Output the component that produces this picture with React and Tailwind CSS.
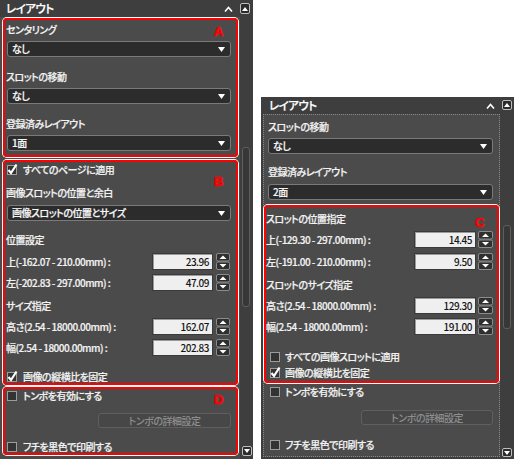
import React from "react";

function Label({ children, className = "" }) {
  return <div className={`h-[14px] whitespace-nowrap leading-[14px] text-[#f2f2f2] ${className}`}>{children}</div>;
}

function Dropdown({ value, className = "" }) {
  return (
    <div className={`flex h-[16px] items-center justify-between rounded-[3px] border border-[#7a7a7a] bg-[#2c2c2c] pl-[4px] pr-[5px] ${className}`}>
      <span className="leading-none text-[#f6f6f6]">{value}</span>
      <svg width="7" height="5" viewBox="0 0 7 5">
        <path d="M0 0H7L3.5 5Z" fill="#ffffff" />
      </svg>
    </div>
  );
}

function Spinner({ w }) {
  return (
    <svg width={w} height="17" viewBox={`0 0 ${w} 17`} className="shrink-0">
      <rect x="0.5" y="0.5" width={w - 1} height="7.5" rx="1.5" fill="#2f2f2f" stroke="#8c8c8c" />
      <rect x="0.5" y="9" width={w - 1} height="7.5" rx="1.5" fill="#2f2f2f" stroke="#8c8c8c" />
      <path d={`M${w / 2 - 3.5} 6L${w / 2} 2.5L${w / 2 + 3.5} 6Z`} fill="#ffffff" />
      <path d={`M${w / 2 - 3.5} 11L${w / 2 + 3.5} 11L${w / 2} 14.5Z`} fill="#ffffff" />
    </svg>
  );
}

function NumRow({ label, value, inputW, spinW, gap, className = "" }) {
  return (
    <div className={`flex h-[17px] items-center ${className}`}>
      <span className="flex-1 whitespace-nowrap text-[#f2f2f2]">{label}</span>
      <div
        style={{ width: inputW }}
        className="h-[17px] border border-[#3a3a3a] bg-[#efefef] pr-[3px] text-right leading-[15px] text-[#151515] shadow-[inset_1px_1px_0_#9a9a9a] [-webkit-text-stroke-width:0px]"
      >
        {value}
      </div>
      <div style={{ width: gap }} />
      <Spinner w={spinW} />
    </div>
  );
}

function Check({ checked, children, className = "", gap = "gap-[6px]" }) {
  return (
    <div className={`flex h-[12px] items-center ${gap} ${className}`}>
      <svg width="10" height="10" viewBox="0 0 10 10" className="shrink-0 overflow-visible">
        <rect x="0.5" y="0.5" width="9" height="9" fill="#333333" stroke="#9c9c9c" />
        {checked && <polyline points="1.5,5 4,8 9.5,-0.5" fill="none" stroke="#ffffff" strokeWidth="2.2" />}
      </svg>
      <span className="whitespace-nowrap leading-[12px] text-[#f2f2f2]">{children}</span>
    </div>
  );
}

function MarkButton({ className = "" }) {
  return (
    <div className={`flex h-[15px] items-center justify-center rounded-[3px] border border-[#5f5f5f] bg-[#474747] text-[#8e8e8e] [-webkit-text-stroke-width:0px] ${className}`}>
      トンボの詳細設定
    </div>
  );
}

function RedBox({ letter, letterPos, className = "", children }) {
  return (
    <div className={`relative rounded-[4px] border-2 border-[#ff0000] shadow-[0_0_0_1px_#ffffff] ${className}`}>
      {children}
      <span className={`absolute font-['Liberation_Sans',sans-serif] text-[13px] font-bold leading-[13px] tracking-normal text-[#ff0000] [-webkit-text-stroke-width:0.6px] ${letterPos}`}>
        {letter}
      </span>
    </div>
  );
}

function Chevron() {
  return (
    <svg width="9" height="6" viewBox="0 0 9 6">
      <polyline points="1,5.5 4.5,1.5 8,5.5" fill="none" stroke="#ffffff" strokeWidth="1.6" />
    </svg>
  );
}

function ScrollBtn({ up, className = "" }) {
  return (
    <div className={`flex items-center justify-center rounded-[2px] border border-[#bdbdbd] bg-[#2b2b2b] ${className}`}>
      <svg width="6" height="4" viewBox="0 0 6 4">
        {up ? <path d="M0 4L3 0L6 4Z" fill="#ffffff" /> : <path d="M0 0H6L3 4Z" fill="#ffffff" />}
      </svg>
    </div>
  );
}

function Thumb({ className = "" }) {
  return <div className={`rounded-[3px] border border-[#5e5e5e] bg-[#373737] ${className}`} />;
}

function LeftPanel() {
  return (
    <div className="flex h-[459px] w-[253px] shrink-0 bg-[#3e3e3e]">
      <div className="flex w-[240px] flex-col">
        <div className="flex h-[17px] items-center justify-between pl-[6px] pr-[7px]">
          <span className="text-[11.5px] leading-none text-[#ffffff]">レイアウト</span>
          <Chevron />
        </div>
        <div className="flex flex-1 flex-col bg-[#4b4b4b] pt-[1px]">
          <RedBox letter="A" letterPos="left-[209px] top-[5px]" className="ml-[3px] mr-[2px] pb-[4px] pl-[1px] pr-[5px] pt-[3px]">
            <Label>センタリング</Label>
            <Dropdown value="なし" className="ml-[1px] mt-[4px]" />
            <Label className="mt-[13px]">スロットの移動</Label>
            <Dropdown value="なし" className="ml-[1px] mt-[4px]" />
            <Label className="mt-[13px]">登録済みレイアウト</Label>
            <Dropdown value="1面" className="ml-[1px] mt-[4px]" />
          </RedBox>
          <RedBox letter="B" letterPos="left-[209px] top-[13px]" className="ml-[3px] mr-[2px] mt-[3px] pl-[1px] pr-[5px] pt-[2px]">
            <Check checked className="ml-[1px]">すべてのページに適用</Check>
            <Label className="mt-[10px]">画像スロットの位置と余白</Label>
            <Dropdown value="画像スロットの位置とサイズ" className="ml-[1px] mt-[5px]" />
            <Label className="mt-[12px]">位置設定</Label>
            <NumRow className="mt-[6px] pr-[1px]" label="上(-162.07 - 210.00mm) :" value="23.96" inputW={61} spinW={14} gap={3} />
            <NumRow className="mt-[4px] pr-[1px]" label="左(-202.83 - 297.00mm) :" value="47.09" inputW={61} spinW={14} gap={3} />
            <Label className="mt-[8px]">サイズ指定</Label>
            <NumRow className="mt-[5px] pr-[1px]" label="高さ(2.54 - 18000.00mm) :" value="162.07" inputW={61} spinW={14} gap={3} />
            <NumRow className="mt-[4px] pr-[1px]" label="幅(2.54 - 18000.00mm) :" value="202.83" inputW={61} spinW={14} gap={3} />
            <Check checked className="ml-[1px] mt-[15px]">画像の縦横比を固定</Check>
          </RedBox>
          <RedBox letter="D" letterPos="left-[209px] top-[4px]" className="ml-[3px] mr-[2px] mt-[2px] flex flex-col pl-[1px] pr-[5px] pt-[1px]">
            <Check className="ml-[1px]">トンボを有効にする</Check>
            <MarkButton className="mt-[11px] w-[133px] self-end" />
            <Check className="ml-[1px] mt-[13px]">フチを黒色で印刷する</Check>
          </RedBox>
        </div>
      </div>
      <div className="flex w-[13px] flex-col">
        <ScrollBtn up className="mt-[3px] h-[11px] w-[10px]" />
        <div className="flex-1">
          <Thumb className="ml-[2px] mt-[133px] h-[160px] w-[8px]" />
        </div>
        <ScrollBtn className="mb-[3px] ml-[2px] h-[10px] w-[10px]" />
      </div>
    </div>
  );
}

function RightPanel() {
  return (
    <div className="ml-[8px] mt-[97px] flex h-[362px] w-[253px] shrink-0 bg-[#3e3e3e]">
      <div className="flex w-[239px] flex-col">
        <div className="flex h-[17px] items-center justify-between pl-[8px] pr-[5px]">
          <span className="text-[11.5px] leading-none text-[#ffffff]">レイアウト</span>
          <Chevron />
        </div>
        <div className="mb-[2px] ml-[2px] flex flex-1 flex-col border border-dotted border-[#8a8a8a] bg-[#4b4b4b] pt-[5px]">
          <Label className="pl-[4px]">スロットの移動</Label>
          <Dropdown value="なし" className="ml-[4px] mr-[6px] mt-[4px]" />
          <Label className="mt-[11px] pl-[4px]">登録済みレイアウト</Label>
          <Dropdown value="2面" className="ml-[4px] mr-[6px] mt-[5px]" />
          <RedBox letter="C" letterPos="left-[209px] top-[9px]" className="mt-[5px] pb-[2px] pr-[4px] pt-[5px]">
            <Label>スロットの位置指定</Label>
            <NumRow className="mt-[5px]" label="上(-129.30 - 297.00mm) :" value="14.45" inputW={62} spinW={15} gap={2} />
            <NumRow className="mt-[5px]" label="左(-191.00 - 210.00mm) :" value="9.50" inputW={62} spinW={15} gap={2} />
            <Label className="mt-[8px]">スロットのサイズ指定</Label>
            <NumRow className="mt-[5px]" label="高さ(2.54 - 18000.00mm) :" value="129.30" inputW={62} spinW={15} gap={2} />
            <NumRow className="mt-[4px]" label="幅(2.54 - 18000.00mm) :" value="191.00" inputW={62} spinW={15} gap={2} />
            <Check className="ml-[4px] mt-[16px]" gap="gap-[5px]">すべての画像スロットに適用</Check>
            <Check checked className="ml-[4px] mt-[4px]" gap="gap-[5px]">画像の縦横比を固定</Check>
          </RedBox>
          <Check className="ml-[6px] mt-[3px]" gap="gap-[5px]">トンボを有効にする</Check>
          <MarkButton className="mr-[6px] mt-[12px] w-[132px] self-end" />
          <Check className="ml-[6px] mt-[14px]" gap="gap-[5px]">フチを黒色で印刷する</Check>
        </div>
      </div>
      <div className="flex w-[14px] flex-col">
        <ScrollBtn up className="ml-[2px] mt-[3px] h-[10px] w-[10px]" />
        <div className="flex-1">
          <Thumb className="ml-[3px] mt-[115px] h-[104px] w-[8px]" />
        </div>
        <ScrollBtn className="mb-[2px] ml-[2px] h-[9px] w-[10px]" />
      </div>
    </div>
  );
}

export default function App() {
  return (
    <div className="flex h-[459px] w-[514px] overflow-hidden bg-white font-['Noto_Sans_CJK_JP',sans-serif] text-[10px] font-medium tracking-[-0.5px] [-webkit-text-stroke-width:0.2px] [font-feature-settings:'palt']">
      <LeftPanel />
      <RightPanel />
    </div>
  );
}
